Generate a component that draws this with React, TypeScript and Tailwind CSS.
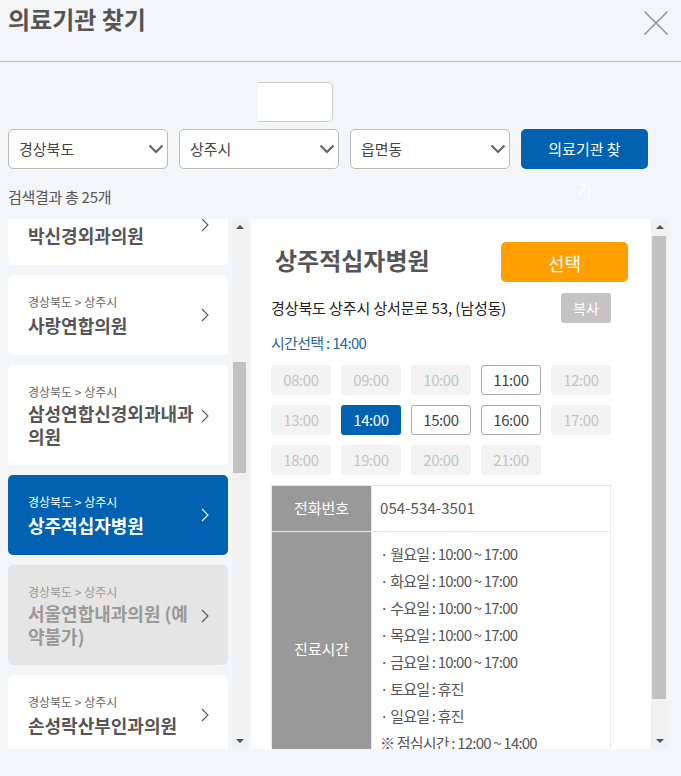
import React from "react";

const font = { fontFamily: '"Noto Sans CJK KR", "Noto Sans", sans-serif' };

function Chevron({ className = "" }: { className?: string }) {
  return (
    <svg width="8" height="14" viewBox="0 0 8 14" fill="none" className={className}>
      <path d="M1 1l6 6-6 6" stroke="currentColor" strokeWidth="1.1" />
    </svg>
  );
}

function SelectBox({ label }: { label: string }) {
  return (
    <div className="w-40 h-10 bg-white border border-[#bbbbbb] rounded-[5px] flex items-center justify-between pl-[10px] pr-[3px] text-[15px] text-[#444]">
      <span>{label}</span>
      <svg width="16" height="10" viewBox="0 0 16 10" fill="none">
        <path d="M1.5 1.5L8 8l6.5-6.5" stroke="#666" strokeWidth="2.2" />
      </svg>
    </div>
  );
}

function Card({ title, variant = "normal", tall = false }: { title: string; variant?: "normal" | "active" | "off"; tall?: boolean }) {
  const bg = variant === "active" ? "bg-[#0062b1] text-white" : variant === "off" ? "bg-[#e5e5e5] text-[#999]" : "bg-white text-[#555]";
  return (
    <div className={`${tall ? "h-[100px] pt-[2px]" : "h-20"} ${bg} rounded-[5px] flex items-center pl-5 pr-[19px] shrink-0`}>
      <div className="flex-1 min-w-0">
        <div className={`text-[12px] leading-[16px] ${variant === "active" ? "text-white" : variant === "off" ? "text-[#999]" : "text-[#666]"}`}>경상북도 &gt; 상주시</div>
        <div className={`${tall ? "mt-[2px] leading-[23px]" : "mt-[3px] leading-[24px]"} text-[18px] font-bold`}>{title}</div>
      </div>
      <Chevron className={variant === "active" ? "text-white" : "text-[#555]"} />
    </div>
  );
}

function Scrollbar({ w, top, height }: { w: string; top: string; height: string }) {
  return (
    <div className={`${w} h-[530px] bg-[#f1f1f1] flex flex-col items-center relative shrink-0`}>
      <div className="mt-[6px] w-0 h-0 border-x-[4px] border-x-transparent border-b-[4px] border-b-[#505050]" />
      <div className={`absolute left-[1px] right-[2px] bg-[#c1c1c1] ${top} ${height}`} />
      <div className="mt-auto mb-[6px] w-0 h-0 border-x-[4px] border-x-transparent border-t-[4px] border-t-[#505050]" />
    </div>
  );
}

function Time({ t, kind = "off" }: { t: string; kind?: "off" | "on" | "sel" }) {
  const cls =
    kind === "sel"
      ? "bg-[#0062b1] text-white"
      : kind === "on"
      ? "bg-white border border-[#aaaaaa] text-[#444]"
      : "bg-[#f3f3f3] text-[#c4c4c4]";
  return <div className={`w-[60px] h-[30px] rounded-[3px] flex items-center justify-center text-[15px] tracking-[-0.4px] ${cls}`}>{t}</div>;
}

const hours = ["월", "화", "수", "목", "금"];

export default function App() {
  return (
    <div className="w-[681px] h-[776px] overflow-hidden bg-[#f3f5f7]" style={font}>
      <div className="h-[62px] border-b border-[#c4c4c4] flex justify-between pl-2 pr-[13px]">
        <h1 className="text-[24px] leading-[38px] font-bold text-[#555]">의료기관 찾기</h1>
        <svg width="24" height="24" viewBox="0 0 24 24" fill="none" className="mt-[11px]">
          <path d="M0.5 0.5l23 23M23.5 0.5l-23 23" stroke="#8c8c8c" strokeWidth="1.4" />
        </svg>
      </div>

      <div className="pt-5 pl-2">
        <div className="ml-[250px] w-[75px] h-10 bg-white border border-[#cccccc] border-l-0 rounded-r-[5px]" />
        <div className="flex gap-[11px] mt-[7px]">
          <SelectBox label="경상북도" />
          <SelectBox label="상주시" />
          <SelectBox label="읍면동" />
          <div className="w-[127px] h-10 bg-[#0062b1] rounded-[5px] px-[26px] text-center text-[15px] leading-[40px] text-white">의료기관 찾기</div>
        </div>
        <div className="mt-[17px] h-[33px] text-[15px] leading-[22px] tracking-[-0.3px] text-[#555]">검색결과 총 25개</div>
      </div>

      <div className="flex pl-2 h-[530px]">
        <div className="w-[220px] h-[530px] overflow-hidden shrink-0">
          <div className="-mt-[34px] flex flex-col gap-[10px]">
            <Card title="박신경외과의원" />
            <Card title="사랑연합의원" />
            <Card title="삼성연합신경외과내과의원" tall />
            <Card title="상주적십자병원" variant="active" />
            <Card title="서울연합내과의원 (예약불가)" variant="off" tall />
            <Card title="손성락산부인과의원" />
          </div>
        </div>
        <div className="ml-1">
          <Scrollbar w="w-4" top="top-[143px]" height="h-[111px]" />
        </div>
        <div className="ml-[3px] w-[400px] h-[530px] bg-white overflow-hidden pl-5 shrink-0">
          <div className="flex justify-between pt-[23px] pr-[23px]">
            <h2 className="pl-1 text-[24px] leading-[36px] font-bold text-[#555]">상주적십자병원</h2>
            <div className="w-[127px] h-10 pt-[3px] bg-[#ff9f00] rounded-[5px] flex items-center justify-center text-[18px] text-white">선택</div>
          </div>
          <div className="w-[340px] flex items-center justify-between mt-[11px] h-[30px]">
            <span className="text-[15px] tracking-[-0.1px] text-[#222]">경상북도 상주시 상서문로 53, (남성동)</span>
            <div className="w-[50px] h-[30px] bg-[#c4c4c4] rounded-[3px] flex items-center justify-center text-[14px] text-white">복사</div>
          </div>
          <div className="mt-[10px] h-[20px] text-[15px] leading-[20px] tracking-[-0.7px] text-[#2a6496]">시간선택 : 14:00</div>
          <div className="mt-[12px] grid grid-cols-[repeat(5,60px)] gap-[10px]">
            {["08:00", "09:00", "10:00"].map((t) => <Time key={t} t={t} />)}
            <Time t="11:00" kind="on" />
            <Time t="12:00" />
            <Time t="13:00" />
            <Time t="14:00" kind="sel" />
            <Time t="15:00" kind="on" />
            <Time t="16:00" kind="on" />
            <Time t="17:00" />
            {["18:00", "19:00", "20:00", "21:00"].map((t) => <Time key={t} t={t} />)}
          </div>
          <table className="mt-[10px] w-[340px] border-collapse text-[15px]">
            <tbody>
              <tr className="h-[46px]">
                <th className="w-[100px] bg-[#999999] text-white font-normal border border-[#e8e8e8]">전화번호</th>
                <td className="pl-[8px] text-[#555] border border-[#e8e8e8] tracking-[0.1px]">054-534-3501</td>
              </tr>
              <tr className="h-[234px]">
                <th className="w-[100px] bg-[#999999] text-white font-normal border border-[#e8e8e8]">진료시간</th>
                <td className="pl-[8px] text-[#555] border border-[#e8e8e8] leading-[27px] pt-[8px] pb-[10px] tracking-[-0.8px]">
                  {hours.map((d) => <div key={d}>· {d}요일 : 10:00 ~ 17:00</div>)}
                  <div>· 토요일 : 휴진</div>
                  <div>· 일요일 : 휴진</div>
                  <div>※ 점심시간 : 12:00 ~ 14:00</div>
                </td>
              </tr>
            </tbody>
          </table>
        </div>
        <Scrollbar w="w-[17px]" top="top-[17px]" height="h-[463px]" />
      </div>
    </div>
  );
}
